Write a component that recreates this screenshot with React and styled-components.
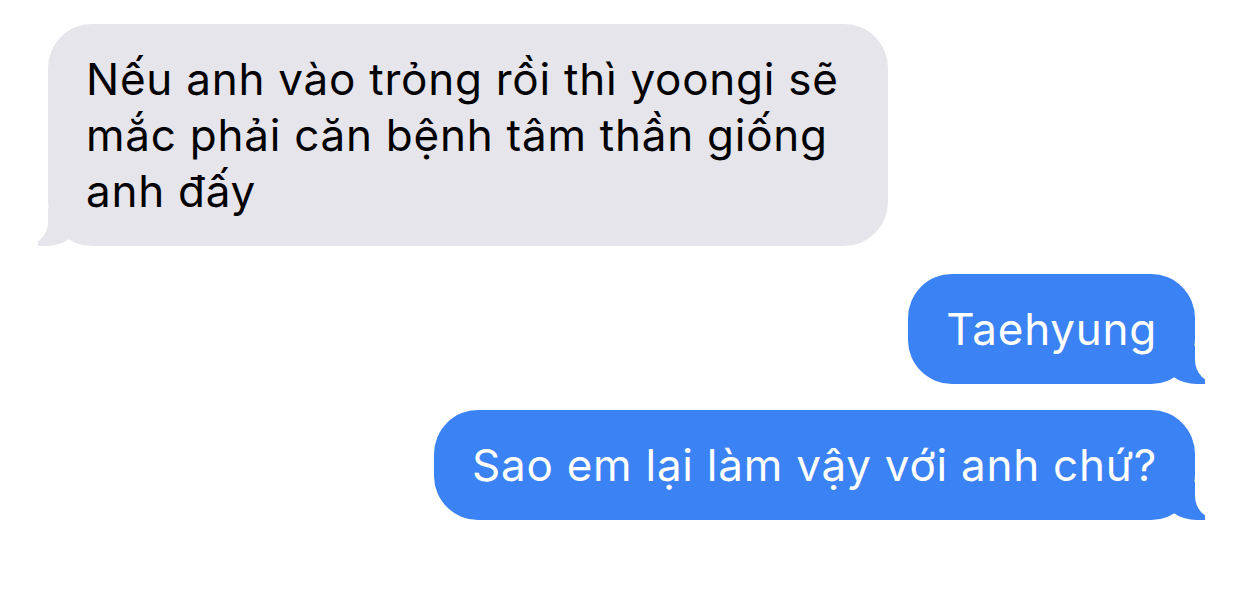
import React from "react";
import styled, { createGlobalStyle, css } from "styled-components";

const GlobalStyle = createGlobalStyle`
  html, body {
    margin: 0;
    background: #ffffff;
  }
  body {
    font-family: Inter, "Liberation Sans", Arial, sans-serif;
    -webkit-font-smoothing: antialiased;
  }
`;

const Thread = styled.div`
  width: 1242px;
  height: 589px;
  box-sizing: border-box;
  padding: 24px 47px 0 48px;
  display: flex;
  flex-direction: column;
  gap: 28px;
`;

const Group = styled.div`
  display: flex;
  flex-direction: column;
  align-items: flex-end;
  gap: 26px;
`;

// bubble with the little curled tail at the bottom corner
const Bubble = styled.div`
  position: relative;
  z-index: 0;
  box-sizing: border-box;
  max-width: 840px;
  padding: 27px 38px;
  border-radius: 44px;
  font-size: 44px;
  line-height: 56px;
  letter-spacing: 0.75px;

  &::before,
  &::after {
    content: "";
    position: absolute;
    bottom: 0;
    height: 38px;
    width: 42px;
    z-index: -1;
  }

  ${({ $me }) =>
    $me
      ? css`
          align-self: flex-end;
          background: #3b82f4;
          color: #ffffff;
          &::before {
            right: -10px;
            background: #3b82f4;
            border-bottom-left-radius: 34px 26px;
          }
          &::after {
            right: -42px;
            background: #ffffff;
            border-bottom-left-radius: 24px;
          }
        `
      : css`
          align-self: flex-start;
          background: #e6e5eb;
          color: #000000;
          &::before {
            left: -10px;
            background: #e6e5eb;
            border-bottom-right-radius: 34px 26px;
          }
          &::after {
            left: -42px;
            background: #ffffff;
            border-bottom-right-radius: 24px;
          }
        `}
`;

const messages = [
  "Taehyung",
  "Sao em lại làm vậy với anh chứ?",
];

export default function App() {
  return (
    <>
      <GlobalStyle />
      <Thread>
        <Bubble>
          Nếu anh vào trỏng rồi thì yoongi sẽ mắc phải căn bệnh tâm thần giống
          anh đấy
        </Bubble>
        <Group>
          {messages.map((m) => (
            <Bubble key={m} $me>
              {m}
            </Bubble>
          ))}
        </Group>
      </Thread>
    </>
  );
}
